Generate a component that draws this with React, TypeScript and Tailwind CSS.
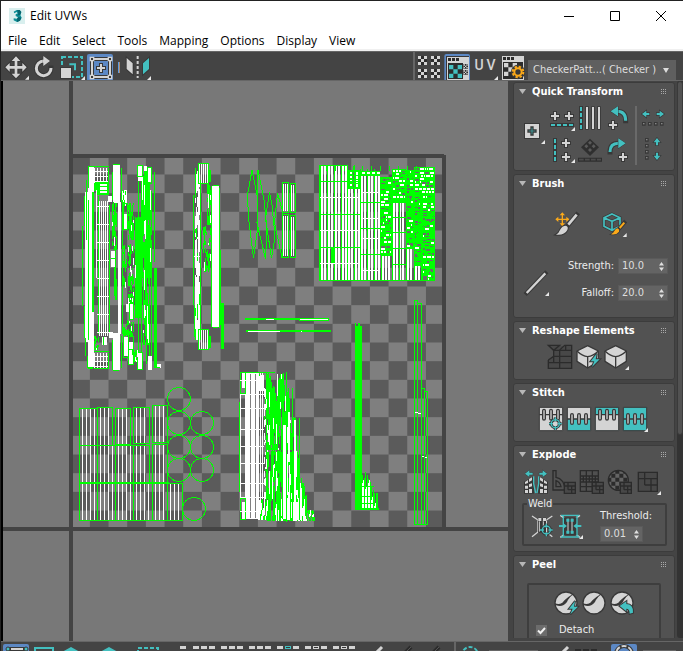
import type { ReactNode } from 'react';

const LIGHT = '#d4d4d4';
const TEAL = '#43c0c0';
const EDGE = '#383838';
const AMBER = '#fba919';
const GREEN = '#00ff00';
const WHITE = '#ffffff';

/* ---------- UV shells ---------- */

type Layer = { fill: string; d: string };

function makeRandom(seed: number) {
  let s = seed;
  return () => {
    s = (s * 1664525 + 1013904223) % 4294967296;
    return s / 4294967296;
  };
}

const box = (x: number, y: number, w: number, h: number) => `M${x} ${y}h${w}v${h}h${-w}z`;

function buildShells(): Layer[] {
  const layers: Layer[] = [];
  const rnd = makeRandom(11);
  const put = (fill: string, x: number, y: number, w: number, h: number) => {
    const last = layers[layers.length - 1];
    if (last && last.fill === fill) last.d += box(x, y, w, h);
    else layers.push({ fill, d: box(x, y, w, h) });
  };
  const frame = (x: number, y: number, w: number, h: number) => {
    put(GREEN, x, y, w, 1);
    put(GREEN, x, y + h - 1, w, 1);
    put(GREEN, x, y, 1, h);
    put(GREEN, x + w - 1, y, 1, h);
  };
  // Columns of short vertical runs: g and w are the shares of green and white.
  const weave = (x0: number, x1: number, y0: number, y1: number, g: number, w: number, run = 12) => {
    for (let x = x0; x < x1; x++) {
      let y = y0 + Math.floor(rnd() * 3);
      while (y < y1) {
        const n = Math.min(y1 - y, 2 + Math.floor(rnd() * run));
        const r = rnd();
        if (r < g) put(GREEN, x, y, 1, n);
        else if (r < g + w) put(WHITE, x, y, 1, n);
        y += n;
      }
    }
  };
  const stripes = (x: number, y: number, w: number, h: number, on: number, pitch: number) => {
    for (let i = 1; i + on < w; i += pitch) put(WHITE, x + i, y, on, h);
  };

  // Far left island
  put(WHITE, 88, 167, 6, 200);
  put(WHITE, 85, 192, 8, 150);
  put(GREEN, 86, 180, 1, 60);
  put(GREEN, 84, 196, 1, 30);
  put(GREEN, 82, 226, 1, 80);
  put(GREEN, 84, 306, 1, 32);
  put(GREEN, 85, 338, 1, 18);
  put(GREEN, 87, 356, 1, 12);
  put(GREEN, 89, 166, 20, 1);
  put(GREEN, 88, 367, 5, 2);
  put(GREEN, 88, 166, 1, 22);
  put(GREEN, 88, 200, 1, 140);
  put(GREEN, 92, 192, 2, 120);
  put(GREEN, 94, 182, 3, 9);
  put(WHITE, 96, 190, 1, 88);
  put(GREEN, 98, 196, 1, 138);
  put(GREEN, 109, 205, 1, 130);
  stripes(98, 201, 12, 135, 1, 2);
  for (let y = 206; y < 334; y += 18) put(WHITE, 97, y, 12, 1);
  for (const y of [168, 353]) {
    stripes(93, y, 16, 15, 1, 3);
    for (let i = 0; i < 3; i++) put(WHITE, 94, y + 3 + i * 5, 14, 1);
    put(GREEN, 108, y, 1, 15);
    put(GREEN, 94, y + 15, 15, 1);
  }
  put(GREEN, 94, 351, 15, 1);
  put(GREEN, 97, 182, 12, 13);
  put(WHITE, 100, 184, 7, 2);
  put(WHITE, 100, 187, 7, 3);
  put(WHITE, 100, 191, 7, 2);
  put(WHITE, 102, 337, 5, 8);
  put(GREEN, 103, 337, 1, 8);
  weave(94, 99, 336, 350, 0.5, 0.1, 5);

  // Second band
  put(WHITE, 113, 165, 7, 38);
  put(GREEN, 113, 164, 7, 1);
  put(GREEN, 112, 172, 1, 28);
  put(GREEN, 121, 168, 1, 34);
  put(WHITE, 108, 196, 4, 6);
  put(WHITE, 118, 202, 3, 132);
  put(GREEN, 122, 200, 1, 134);
  put(WHITE, 113, 333, 7, 37);
  put(WHITE, 109, 332, 4, 6);
  put(GREEN, 112, 340, 1, 30);
  put(GREEN, 121, 336, 1, 32);
  put(GREEN, 113, 370, 6, 1);
  weave(112, 117, 202, 250, 0.6, 0.06, 8);
  weave(114, 117, 265, 300, 0.7, 0.05, 9);
  put(WHITE, 111, 251, 4, 16);
  put(GREEN, 111, 258, 4, 1);
  put(GREEN, 115, 245, 1, 52);

  // Third band
  put(WHITE, 123, 190, 4, 14);
  weave(122, 126, 190, 206, 0.55, 0.4, 4);
  put(WHITE, 124, 214, 4, 15);
  frame(123, 203, 5, 27);
  weave(128, 134, 203, 240, 0.7, 0.08, 5);
  weave(123, 127, 244, 288, 0.5, 0.05, 9);
  weave(128, 134, 244, 292, 0.45, 0.05, 6);
  weave(128, 134, 292, 304, 0.6, 0.3, 3);
  put(WHITE, 130, 304, 4, 15);
  put(WHITE, 126, 304, 3, 8);
  frame(129, 303, 5, 17);
  weave(123, 134, 320, 336, 0.5, 0.12, 4);
  put(WHITE, 124, 337, 4, 19);
  put(WHITE, 129, 342, 4, 22);
  frame(123, 330, 6, 28);
  frame(128, 336, 6, 29);
  put(GREEN, 129, 349, 4, 1);

  // Dense green bands
  weave(135, 142, 216, 318, 0.9, 0.05, 24);
  weave(142, 152, 176, 278, 0.85, 0.04, 20);
  weave(143, 149, 270, 345, 0.5, 0.08, 20);
  for (const x of [138, 141, 146, 149]) put(GREEN, x, 168, 1, 196);
  put(GREEN, 154, 172, 1, 90);
  put(GREEN, 154, 268, 3, 100);
  put(GREEN, 151, 240, 1, 120);
  put(WHITE, 138, 165, 5, 16);
  put(WHITE, 144, 166, 3, 10);
  put(WHITE, 148, 168, 4, 14);
  frame(137, 165, 6, 12);
  frame(147, 167, 5, 17);
  put(GREEN, 144, 171, 3, 12);
  put(WHITE, 138, 353, 4, 17);
  put(WHITE, 148, 356, 4, 14);
  frame(137, 352, 6, 18);
  put(WHITE, 157, 364, 4, 4);
  put(GREEN, 155, 367, 5, 1);
  weave(132, 138, 350, 362, 0.5, 0.1, 4);

  // Tall pair of strips
  weave(195, 200, 170, 340, 0.08, 0.72, 14);
  put(GREEN, 195, 168, 1, 30);
  put(GREEN, 193, 195, 1, 110);
  put(GREEN, 194, 305, 1, 32);
  put(GREEN, 200, 180, 1, 160);
  put(WHITE, 194, 256, 6, 1);
  for (const y of [164, 330]) {
    stripes(198, y, 12, 19, 1, 2);
    frame(198, y - 1, 11, 21);
    put(GREEN, 209, y + 6, 2, 12);
  }
  weave(207, 211, 183, 225, 0.6, 0.25, 9);
  weave(203, 211, 226, 272, 0.35, 0.04, 8);
  put(WHITE, 212, 186, 7, 141);
  put(GREEN, 211, 186, 1, 141);
  put(GREEN, 219, 188, 1, 140);
  put(GREEN, 213, 185, 6, 1);
  put(GREEN, 213, 327, 5, 1);
  put(GREEN, 221, 303, 3, 46);
  put(GREEN, 220, 250, 1, 75);

  // Small striped strips
  for (const [x, y, w, h] of [[282, 182, 7, 31], [290, 183, 6, 30], [282, 214, 7, 44], [290, 215, 6, 43]]) {
    stripes(x, y + 2, w, h - 4, 1, 2);
    frame(x, y, w, h);
  }

  // Large packed block
  for (let x = 320; x < 347; x += 7) {
    stripes(x, 166, 7, 114, 2, 3);
    put(GREEN, x, 165, 1, 116);
  }
  for (let x = 347; x < 360; x += 7) {
    stripes(x, 189, 7, 91, 2, 3);
    put(GREEN, x, 165, 1, 116);
  }
  put(GREEN, 348, 170, 12, 19);
  for (let y = 172; y < 187; y += 4) {
    put(WHITE, 350, y, 2, 2);
    put('#666666', 353, y, 1, 3);
    put(WHITE, 356, y, 2, 3);
  }
  for (let x = 360; x < 380; x += 7) {
    stripes(x, 176, 8, 104, 2, 3);
    put(GREEN, x, 169, 1, 112);
  }
  put(GREEN, 360, 171, 20, 5);
  for (let x = 362; x < 379; x += 5) put(WHITE, x, 172, 3, 2);
  for (const y of [181, 214, 247]) put(GREEN, 320, y, 40, 1);
  for (const y of [197, 230, 263]) put(WHITE, 320, y, 40, 1);
  for (const y of [202, 228, 254]) put(GREEN, 360, y, 21, 1);
  for (const y of [192, 218, 238, 270]) put(WHITE, 361, y, 19, 1);
  put(GREEN, 319, 165, 28, 1);
  put(GREEN, 331, 247, 3, 16);
  put(GREEN, 341, 190, 1, 24);

  // Small packed pieces: a green cell with a white or empty centre.
  const flecks = (x0: number, x1: number, y0: number, y1: number, g: number, w: number) => {
    put(GREEN, x0, y0, x1 - x0, y1 - y0);
    let y = y0 + 1;
    while (y < y1 - 2) {
      let x = x0 + 1;
      while (x < x1 - 1) {
        const n = Math.min(1 + Math.floor(rnd() * 4), x1 - 1 - x);
        const r = rnd();
        if (r < w) put(WHITE, x, y, n, 2);
        else if (r < w + g) put('#6a6a6a', x, y + Math.floor(rnd() * 2), n, 1 + Math.floor(rnd() * 2));
        x += n + 1;
      }
      y += 3 + Math.floor(rnd() * 2);
    }
  };
  flecks(380, 392, 177, 255, 0.4, 0.35);
  flecks(392, 406, 169, 202, 0.3, 0.5);
  flecks(406, 414, 170, 248, 0.5, 0.12);
  flecks(414, 435, 167, 195, 0.2, 0.65);
  flecks(414, 422, 195, 265, 0.5, 0.2);
  flecks(422, 435, 195, 281, 0.5, 0.22);
  for (const [x0, x1, y0] of [[381, 392, 255], [392, 406, 202], [406, 414, 248], [414, 421, 265]]) {
    stripes(x0, y0, x1 - x0 + 1, 280 - y0, 2, 3);
    put(GREEN, x0, y0, 1, 281 - y0);
    put(GREEN, x1, y0, 1, 281 - y0);
    put(GREEN, x0, y0, x1 - x0, 1);
  }
  for (const y of [217, 232, 248, 264]) put(GREEN, 392, y, 14, 1);
  put(GREEN, 399, 202, 1, 79);
  put(GREEN, 319, 165, 1, 116);
  put(GREEN, 319, 280, 116, 1);
  for (let x = 326; x < 420; x += 9) put(GREEN, x, 166, 1, 5);

  // Thin horizontal strips
  put(GREEN, 245, 318, 84, 2);
  put(GREEN, 299, 320, 30, 1);
  put(WHITE, 266, 319, 8, 1);
  put(WHITE, 300, 319, 28, 1);
  put(GREEN, 246, 330, 85, 2);
  put(WHITE, 248, 331, 32, 1);
  put(WHITE, 301, 331, 1, 1);

  // Tall solid strip and its steps
  put(GREEN, 355, 326, 7, 184);
  put(GREEN, 355, 323, 1, 4);
  put(GREEN, 358, 323, 2, 4);
  [[362, 475, 480], [365, 472, 486], [368, 479, 480], [371, 487, 497], [374, 493, 503]].forEach(([x, y, w]) => {
    put(WHITE, x, w, 2, 508 - w);
    put(GREEN, x, y, 1, w - y + 3);
    put(GREEN, x + 2, y + 3, 1, 506 - y);
  });
  for (const y of [486, 496, 503]) put(GREEN, 362, y, 12, 1);
  put(GREEN, 355, 508, 24, 2);
  put(GREEN, 376, 493, 2, 16);

  // Tall thin outlines
  put(GREEN, 414, 300, 1, 225);
  put(GREEN, 417, 300, 1, 225);
  put(GREEN, 421, 303, 1, 222);
  put(GREEN, 424, 388, 1, 137);
  put(GREEN, 427, 391, 1, 134);
  put(GREEN, 414, 300, 4, 1);
  put(GREEN, 417, 303, 5, 1);
  put(GREEN, 421, 388, 4, 1);
  put(GREEN, 424, 391, 4, 1);
  put(GREEN, 414, 524, 14, 1);
  put(WHITE, 415, 412, 3, 1);
  put(WHITE, 418, 413, 3, 1);
  put(WHITE, 422, 456, 2, 1);
  put(WHITE, 425, 457, 2, 1);

  // Bottom left sheets
  const sheets: [number, number, number, number][] = [
    [79, 408, 19, 38], [97, 407, 16, 39], [115, 408, 16, 37], [133, 407, 17, 37], [152, 405, 16, 38],
    [79, 445, 19, 38], [97, 445, 19, 38], [115, 445, 19, 38], [133, 445, 17, 38], [152, 444, 16, 39],
    [79, 483, 19, 38], [97, 483, 19, 38], [115, 483, 19, 38], [133, 483, 20, 38], [152, 483, 16, 38], [167, 483, 16, 38],
  ];
  for (const [x, y, w, h] of sheets) {
    for (let i = 3; i < w - 2; i += 4) put(WHITE, x + i, y + 1, 1, h - 2);
    frame(x, y, w, h);
  }
  put(GREEN, 79, 482, 90, 1);

  // Bottom centre island
  put(WHITE, 245, 373, 14, 146);
  stripes(257, 372, 7, 148, 1, 2);
  put(WHITE, 240, 395, 1, 105);
  put(GREEN, 239, 402, 1, 90);
  put(WHITE, 242, 373, 3, 15);
  put(WHITE, 242, 502, 3, 17);
  frame(240, 372, 6, 22);
  frame(240, 498, 6, 22);
  put('#808080', 250, 374, 1, 144);
  put('#808080', 255, 374, 1, 144);
  for (const y of [380, 394, 408, 429, 446, 463, 483, 497, 511]) put(WHITE, 240, y, 24, 1);
  put(GREEN, 245, 372, 30, 1);
  weave(259, 264, 373, 391, 0.4, 0.55, 14);
  weave(264, 268, 385, 520, 0.12, 0.55, 8);
  weave(259, 268, 498, 520, 0.4, 0.5, 12);
  const tops = [372, 373, 372, 376, 374, 382, 388, 385, 376, 392, 384, 373, 380, 374, 372, 372, 374, 372, 372, 394, 400, 392, 388, 398, 418, 420, 422, 418, 417, 418, 435, 435, 458, 460, 476, 477, 482, 482, 486, 495, 494];
  tops.forEach((y, i) => {
    const x = 266 + i;
    const mid = Math.max(y, 450);
    const late = i > 14;
    weave(x, x + 1, y, mid, 0.82, late ? 0.12 : 0.08, 22);
    weave(x, x + 1, mid, 521, late ? 0.52 : 0.72, late ? 0.46 : 0.14, 26);
  });
  put(WHITE, 283, 425, 3, 94);
  put(WHITE, 288, 412, 2, 50);
  put(WHITE, 294, 420, 2, 60);
  put(WHITE, 287, 498, 3, 22);
  put(WHITE, 293, 502, 6, 18);
  weave(307, 315, 510, 521, 0.6, 0.15, 3);
  for (const [x, y, h] of [[282, 374, 145], [286, 372, 150], [292, 388, 132], [299, 418, 102]]) put(GREEN, x, y, 1, h);
  return layers;
}

const SHELLS = buildShells();

const CIRCLES: [number, number][] = [
  [179, 399], [179, 423], [202, 423], [179, 447], [202, 447], [179, 470], [202, 470], [194, 509],
];

function Canvas() {
  return (
    <main className="min-w-0 flex-1 overflow-hidden border-l-2 border-black bg-[#787878]">
      <svg className="block h-[560px] w-[505px] overflow-visible" role="img" aria-label="UV layout">
        <defs>
          <pattern id="checker" x="71.2" y="155.8" width="37.34" height="37.34" patternUnits="userSpaceOnUse">
            <rect width="38" height="38" fill="#7f7f7f" />
            <rect width="18.67" height="18.67" fill="#5b5b5b" />
            <rect x="18.67" y="18.67" width="18.67" height="18.67" fill="#5b5b5b" />
          </pattern>
        </defs>
        <g transform="translate(-3 -81)" shapeRendering="crispEdges">
          <rect x="71" y="156" width="373" height="373" fill="url(#checker)" />
          <path d="M69 81h4v3000h-4zM3 527h3000v4h-3000zM69 154h375v4h-375zM442 155h4v374h-4z" fill="#444" />
          {SHELLS.map((layer, i) => (
            <path key={i} d={layer.d} fill={layer.fill} />
          ))}
          <g fill="none" stroke={GREEN}>
            {CIRCLES.map(([x, y]) => (
              <circle key={`${x}-${y}`} cx={x} cy={y} r="11.5" />
            ))}
            <path d="M252 170L247.500 195L248.500 218L253.500 258L257.500 230L257 195ZM258 170L257 223L265.500 259L267 230L264 200ZM269.500 192L265.500 218L271.500 258L275 237L272 205ZM277.500 193L274.500 223L282 258L283 213Z" />
          </g>
        </g>
      </svg>
    </main>
  );
}

/* ---------- Icon parts, drawn on a grid of three units to a pixel ---------- */

function Icon({ view, className, children }: { view: string; className: string; children: ReactNode }) {
  return (
    <svg viewBox={view} className={className} aria-hidden="true">
      {children}
    </svg>
  );
}

function Solid({ d, fill = LIGHT, edge = 6 }: { d: string; fill?: string; edge?: number }) {
  return <path d={d} fill={fill} stroke={EDGE} strokeWidth={edge} style={{ paintOrder: 'stroke' }} />;
}

function Line({ d, color = LIGHT, width = 6 }: { d: string; color?: string; width?: number }) {
  return (
    <>
      <path d={d} fill="none" stroke={EDGE} strokeWidth={width + 6} strokeLinecap="square" />
      <path d={d} fill="none" stroke={color} strokeWidth={width} />
    </>
  );
}

const Corner = ({ x, y }: { x: number; y: number }) => <path d={`M${x} ${y}v-12l-12 12z`} fill="#e8e8e8" />;

const plus = (x: number, y: number) => `M${x - 3} ${y - 12}h6v9h9v6h-9v9h-6v-9h-9v-6h9z`;

function Tool({ label, view, className = 'h-[30px] w-7', children }: { label: string; view: string; className?: string; children: ReactNode }) {
  return (
    <button type="button" aria-label={label} className="block shrink-0">
      <Icon view={view} className={className}>
        {children}
      </Icon>
    </button>
  );
}

/* ---------- Title, menu, toolbar ---------- */

function TitleBar() {
  return (
    <header className="flex h-[29px] shrink-0 items-center bg-white pl-2 text-black">
      <Icon view="0 0 48 48" className="h-4 w-4">
        <rect width="48" height="48" fill="#d9efee" />
        <path d="M14 11l9-5h9l5 6-3 9 4 8-5 9-9 4-10-5v-6l9 1 4-4-7-4v-5l6-3-3-4-7 4z" fill="#0c8f96" />
        <path d="M24 6h8l5 6-3 8-9 3 3-8zM24 33l4-6 9 2-4 9-9 4z" fill="#07656f" />
      </Icon>
      <h1 className="ml-[5px] text-[12px]">Edit UVWs</h1>
      <div className="ml-auto flex">
        <button type="button" aria-label="Minimize" className="flex h-7 w-[46px] items-center justify-center">
          <svg className="h-[10px] w-[10px]" shapeRendering="crispEdges"><path d="M0 5h10v1H0z" /></svg>
        </button>
        <button type="button" aria-label="Maximize" className="flex h-7 w-[46px] items-center justify-center">
          <svg className="h-[10px] w-[10px]"><path d="M.5.5h9v9h-9z" fill="none" stroke="#000" /></svg>
        </button>
        <button type="button" aria-label="Close" className="flex h-7 w-[45px] items-center justify-center">
          <svg className="h-[10px] w-[10px]"><path d="M0 0l10 10M10 0L0 10" stroke="#000" /></svg>
        </button>
      </div>
    </header>
  );
}

function MenuBar() {
  return (
    <nav className="flex h-[21px] shrink-0 items-center gap-3 border-b-2 border-[#f0f0f0] bg-white pl-[7px] pt-[2px] text-[12px] text-black">
      {['File', 'Edit', 'Select', 'Tools', 'Mapping', 'Options', 'Display', 'View'].map((name) => (
        <button key={name} type="button">{name}</button>
      ))}
    </nav>
  );
}

const checkers = (x: number, y: number, s: number, n: number) => {
  let d = '';
  for (let r = 0; r < n; r++) for (let c = 0; c < n; c++) if ((r + c) % 2 === 0) d += box(x + c * s, y + r * s, s, s);
  return d;
};

function Toolbar() {
  return (
    <div className="flex h-[30px] shrink-0 items-stretch border-y border-[#666] bg-[#444] pl-px">
      <Tool label="Move" view="6 156 84 84" className="h-7 w-7">
        <Solid d="M48 169l13 14h-9v15h15v-9l13 13-13 13v-9h-15v15h9l-13 14-13-14h9v-15h-15v9l-13-13 13-13v9h15v-15h-9z" />
        <Corner x={87} y={239} />
      </Tool>
      <Tool label="Rotate" view="90 156 84 84" className="h-7 w-7">
        <Line d="M153 204a22 22 0 1 1-22-21" width={9} />
        <Solid d="M130 168l20 15-20 15z" edge={3} />
        <Solid d="M129 179h6v9h-6z" edge={0} />
      </Tool>
      <Tool label="Scale" view="174 156 84 84" className="h-7 w-7">
        <path d="M186 171h60v60h-60z" fill="none" stroke={TEAL} strokeWidth="6" strokeDasharray="12 6" />
        <path d="M208 193h17v18" fill="none" stroke={TEAL} strokeWidth="6" />
        <Solid d="M183 204h30v30h-30z" />
        <Corner x={255} y={240} />
      </Tool>
      <Tool label="Freeform" view="258 156 84 84" className="h-7 w-7">
        <rect x="261" y="162" width="78" height="81" rx="6" fill="#5c88c4" />
        <path d="M276 177h54v54h-54z" fill="none" stroke={EDGE} strokeWidth="12" />
        <path d="M276 177h54v54h-54z" fill="none" stroke={LIGHT} strokeWidth="6" />
        {[[276, 177], [330, 177], [276, 231], [330, 231]].map(([x, y]) => (
          <path key={`${x}-${y}`} d={box(x - 5, y - 5, 10, 10)} fill={EDGE} stroke={LIGHT} strokeWidth="4" />
        ))}
        <Solid d={plus(303, 204)} />
      </Tool>
      <Icon view="342 156 30 84" className="h-7 w-[10px] shrink-0">
        <path d="M354 186h3v33h-3z" fill="#5c9be0" />
        <path d="M357 186h3v33h-3z" fill="#b08a6a" />
      </Icon>
      <Tool label="Mirror" view="372 156 84 84" className="h-7 w-7">
        <Solid d="M380 174l18 16v33l-18-16z" />
        <Solid d="M447 174l-18 16v33l18-16z" fill={TEAL} />
        <path d="M413 168v66" stroke={LIGHT} strokeWidth="6" strokeDasharray="9 6" />
        <Corner x={453} y={240} />
      </Tool>
      <div className="ml-auto flex items-stretch border-l-2 border-[#666] pr-[7px]">
        <Tool label="Show tiled checker" view="45 156 84 84" className="h-7 w-7">
          {[[54, 168], [93, 168], [54, 207], [93, 207]].map(([x, y]) => (
            <g key={`${x}-${y}`}>
              <rect x={x} y={y} width="27" height="27" fill="#2c2c2c" />
              <path d={checkers(x, y, 9, 3)} fill={LIGHT} />
            </g>
          ))}
        </Tool>
        <Tool label="Show checker in view" view="129 156 84 84" className="h-7 w-7">
          <rect x="133" y="162" width="77" height="81" rx="6" fill="#5c88c4" />
          <path d="M138 168h69v75h-69z" fill={EDGE} />
          <path d="M141 171h66v69h-66z" fill={LIGHT} />
          <path d="M144 174h9v9h-9zM156 174h9v9h-9zM168 174h9v9h-9zM144 189h45v48h-45zM190 192h14v14h-14zM190 210h14v14h-14z" fill="#2c2c2c" />
          <path d={checkers(147, 195, 13, 3)} fill={TEAL} />
          <path d={checkers(191, 193, 4, 3) + checkers(191, 211, 4, 3)} fill={LIGHT} />
        </Tool>
        <button type="button" aria-label="UV display" className="relative flex h-7 w-7 items-center justify-center gap-[3px] pb-[2px] text-[14px] font-medium text-[#d4d4d4] [font-family:Roboto,sans-serif]">
          <span>U</span>
          <span>V</span>
          <svg className="absolute bottom-0 right-px h-1 w-1" aria-hidden="true"><path d="M4 0v4H0z" fill="#e8e8e8" /></svg>
        </button>
        <Tool label="Checker settings" view="297 156 84 84" className="h-7 w-7">
          <path d="M306 168h66v72h-66z" fill={LIGHT} />
          <path d="M309 171h9v9h-9zM321 171h9v9h-9zM333 171h9v9h-9zM309 186h60v51h-60z" fill="#2c2c2c" />
          <path d={checkers(312, 189, 13, 3)} fill={LIGHT} />
          <circle cx="354" cy="216" r="14" fill="none" stroke={EDGE} strokeWidth="15" />
          <circle cx="354" cy="216" r="16" fill="none" stroke={AMBER} strokeWidth="6" strokeDasharray="7 5.600" />
          <circle cx="354" cy="216" r="11" fill={EDGE} stroke={AMBER} strokeWidth="6" />
        </Tool>
        <div className="relative ml-px mt-2">
          <select
            aria-label="Texture"
            className="block h-5 w-[148px] appearance-none bg-[#5f5f5f] pl-[5px] text-[11px] text-[#dedede] [font-family:'DejaVu_Sans_Condensed','DejaVu_Sans',sans-serif]"
          >
            <option>CheckerPatt...( Checker )</option>
          </select>
          <svg className="pointer-events-none absolute right-[7px] top-2 h-[5px] w-[6px]" aria-hidden="true">
            <path d="M0 0h6L3 5z" fill="#dcdcdc" />
          </svg>
        </div>
      </div>
    </div>
  );
}

/* ---------- Side panel ---------- */

function Rollout({ title, height, children }: { title: string; height: string; children: ReactNode }) {
  return (
    <section className={`w-[162px] shrink-0 overflow-hidden rounded-[3px] border border-[#3c3c3c] bg-[#525252] ${height}`}>
      <button type="button" className="flex h-[17px] w-full items-center pl-[5px] pr-[7px]">
        <svg className="h-[5px] w-[7px]" aria-hidden="true"><path d="M0 0h7L3.500 5z" fill="#b8b8b8" /></svg>
        <span className="ml-[6px] text-[11px] leading-[17px] font-bold text-white">{title}</span>
        <svg className="ml-auto h-[5px] w-[6px]" shapeRendering="crispEdges" aria-hidden="true">
          <path d="M0 0h1v1H0zM2 0h1v1H2zM4 0h1v1H4zM0 2h1v1H0zM2 2h1v1H2zM4 2h1v1H4zM0 4h1v1H0zM2 4h1v1H2zM4 4h1v1H4z" fill="#aaa" />
        </svg>
      </button>
      {children}
    </section>
  );
}

function Spinner({ id, value, width }: { id: string; value: string; width: string }) {
  return (
    <div className={`flex h-4 items-center border border-[#5a5a5a] bg-[#646464] pr-[3px] ${width}`}>
      <input id={id} type="text" defaultValue={value} className="w-0 min-w-0 flex-1 bg-transparent pl-[3px] text-[11px] leading-[14px] text-[#dedede] outline-none" />
      <svg className="h-[9px] w-[5px]" aria-hidden="true"><path d="M0 3.500h5L2.500 0zM0 5.500h5L2.500 9z" fill="#dedede" /></svg>
    </div>
  );
}

function QuickTransform() {
  return (
    <Rollout title="Quick Transform" height="h-[89px]">
      <div className="flex pl-[6px] pt-1">
        <div className="flex h-[60px] items-center">
          <Tool label="Align to pivot" view="36 117 84 90">
            <Solid d="M51 132h42v42h-42z" />
            <path d={plus(72, 153)} fill={TEAL} stroke={EDGE} strokeWidth="4" />
            <Corner x={111} y={192} />
          </Tool>
        </div>
        <div className="grid grid-cols-3">
          <Tool label="Align horizontally" view="120 72 84 90">
            <Solid d={plus(141, 108) + plus(183, 108)} />
            <path d="M126 129h72v12h-72z" fill={EDGE} />
            <path d="M129 135h66" stroke={TEAL} strokeWidth="6" strokeDasharray="12 6" />
            <Corner x={201} y={153} />
          </Tool>
          <Tool label="Linear align" view="204 72 84 90">
            <path d="M213 78h12v72h-12z" fill={EDGE} />
            <path d="M219 81v66" stroke={TEAL} strokeWidth="6" strokeDasharray="12 6" />
            <Solid d="M234 81h6v66h-6zM252 81h6v66h-6zM270 81h6v66h-6z" edge={5} />
          </Tool>
          <Tool label="Rotate left" view="288 72 84 90">
            <Line d="M353 122q0-28-26-28" color={TEAL} width={9} />
            <Solid d="M308 94l22-15v30z" fill={TEAL} edge={3} />
            <Solid d={plus(315, 135)} />
          </Tool>
          <Tool label="Align vertically" view="120 162 84 90">
            <path d="M135 171h12v72h-12z" fill={EDGE} />
            <path d="M141 174v66" stroke={TEAL} strokeWidth="6" strokeDasharray="12 6" />
            <Solid d={plus(174, 186) + plus(174, 228)} />
            <Corner x={201} y={246} />
          </Tool>
          <Tool label="Align to edge" view="204 162 84 90">
            <path d="M246 173l27 26-27 26-27-26z" fill="#2f2f2f" />
            <path d="M246 179l6 6-6 6-6-6zM235 190l6 6-6 6-6-6zM257 190l6 6-6 6-6-6zM246 201l6 6-6 6-6-6z" fill="#5a5a5a" />
            <path d="M210 230h72v12h-72z" fill="#2f2f2f" />
            <path d="M213 236h66" stroke="#4c4c4c" strokeWidth="5" strokeDasharray="14 4" />
          </Tool>
          <Tool label="Rotate right" view="288 162 84 90">
            <Line d="M306 213q0-26 26-26" color={TEAL} width={9} />
            <Solid d="M353 187l-22-15v30z" fill={TEAL} edge={3} />
            <Solid d={plus(345, 228)} />
          </Tool>
        </div>
        <div className="mt-[2px] ml-[3px] h-[59px] w-[2px] bg-[#6a6a6a]" />
        <div className="ml-[2px]">
          <Tool label="Space horizontally" view="393 72 84 90">
            <Solid d="M402 102l13-10v7h9v6h-9v7zM468 102l-13-10v7h-9v6h9v7z" fill={TEAL} edge={4} />
            <path d="M404 128h7v7h-7zM422 128h7v7h-7zM440 128h7v7h-7zM458 128h7v7h-7z" fill={LIGHT} stroke={EDGE} strokeWidth="4" />
          </Tool>
          <Tool label="Space vertically" view="393 162 84 90">
            <Solid d="M447 174l-10 13h7v9h6v-9h7zM447 240l-10-13h7v-9h6v9h7z" fill={TEAL} edge={4} />
            <path d="M413 176h7v7h-7zM413 194h7v7h-7zM413 212h7v7h-7zM413 230h7v7h-7z" fill={LIGHT} stroke={EDGE} strokeWidth="4" />
          </Tool>
        </div>
      </div>
    </Rollout>
  );
}

function Brush() {
  return (
    <Rollout title="Brush" height="h-[144px]">
      <div className="flex justify-center gap-[18px] pr-2 pt-[18px]">
        <Tool label="Paint move brush" view="132 120 84 90">
          <path d="M160 130v36M142 148h36" stroke={AMBER} strokeWidth="4" />
          <path d="M160 127l8 9h-16zM160 169l8-9h-16zM139 148l9-8v16zM181 148l-9-8v16z" fill={AMBER} />
          <Line d="M203 134l-25 30" width={8} />
          <Solid d="M171 167q8 3 4 13-9 17-34 14 9-5 12-14 6-13 18-13z" />
        </Tool>
        <Tool label="Relax brush" view="270 120 84 90">
          <path d="M309 132l24 11v26l-24 12-24-12v-26zM285 143l24 11 24-11M309 154v26" fill="none" stroke={EDGE} strokeWidth="9" />
          <path d="M309 132l24 11v26l-24 12-24-12v-26zM285 143l24 11 24-11M309 154v26" fill="none" stroke={TEAL} strokeWidth="5" />
          <Line d="M346 158l-14 16" color={AMBER} width={6} />
          <Solid d="M326 175q7 4 4 10-8 11-24 8 8-4 10-10 4-8 10-8z" fill={AMBER} edge={4} />
          <Corner x={353} y={201} />
        </Tool>
      </div>
      <div className="flex items-center pt-[18px] pr-[6px]">
        <div className="ml-[9px] mt-[6px]">
          <Tool label="Falloff type" view="45 288 84 90">
            <Line d="M56 363l56-59" width={7} />
            <Corner x={123} y={372} />
          </Tool>
        </div>
        <div className="ml-auto grid grid-cols-[auto_auto] items-center justify-items-end gap-x-1 gap-y-[11px] text-[11px] leading-4 text-[#ececec]">
          <label htmlFor="strength">Strength:</label>
          <Spinner id="strength" value="10.0" width="w-[50px]" />
          <label htmlFor="falloff">Falloff:</label>
          <Spinner id="falloff" value="20.0" width="w-[50px]" />
        </div>
      </div>
    </Rollout>
  );
}

function CubeShape({ x }: { x: number }) {
  return (
    <>
      <path d={`M${x} 107l32 16v31l-32 20-32-20v-31z`} fill={LIGHT} stroke={EDGE} strokeWidth="4" strokeLinejoin="round" />
      <path d={`M${x - 32} 123q15 15 32 17 17-2 32-17M${x} 140v33`} fill="none" stroke={EDGE} strokeWidth="4" />
    </>
  );
}

const BOLT = 'M0 0l-18 23h11l-7 17 23-23h-12z';

function Reshape() {
  return (
    <Rollout title="Reshape Elements" height="h-[59px]">
      <div className="flex pl-8 pt-[3px]">
        <Tool label="Straighten" view="114 96 84 90">
          <path d="M138 108h53v68h-70v-26l16-11v-14l-15-17z" fill="#484848" />
          <path d="M121 106h34l-18 15zM170 106h21v15h-37zM121 150l16-11M137 121h54M137 139h54M121 158h70M155 121v54M137 121v37M121 150v25h70v-69M173 121v-15" fill="none" stroke="#2b2b2b" strokeWidth="4" />
        </Tool>
        <Tool label="Quick relax" view="198 96 84 90">
          <CubeShape x={239} />
          <g transform="translate(266 131)"><Solid d={BOLT} fill={TEAL} /></g>
        </Tool>
        <Tool label="Relax" view="282 96 84 90">
          <CubeShape x={323} />
          <Corner x={363} y={180} />
        </Tool>
      </div>
    </Rollout>
  );
}

function StitchIcon({ x, top, bottom, seam }: { x: number; top: string; bottom: string; seam: number }) {
  return (
    <>
      <path d={box(x, 292, 70, 70)} fill={top} />
      <path d={box(x, seam, 70, 362 - seam)} fill={bottom} />
      <path d={box(x, 292, 70, 70)} fill="none" stroke={EDGE} strokeWidth="3" />
      <path d={`M${x} ${seam}h70`} stroke={EDGE} strokeWidth="4" />
      {[14, 35, 56].map((o) => (
        <rect key={o} x={x + o - 4} y={seam - 16} width="8" height="32" rx="4" fill={LIGHT} stroke={EDGE} strokeWidth="4" />
      ))}
    </>
  );
}

function Target({ x, y }: { x: number; y: number }) {
  const d = `M${x} ${y - 19}v12M${x} ${y + 7}v12M${x - 19} ${y}h12M${x + 7} ${y}h12M${x - 12} ${y}a12 12 0 1 0 24 0a12 12 0 1 0-24 0`;
  return (
    <>
      <path d={d} fill="none" stroke={EDGE} strokeWidth="9" />
      <path d={d} fill="none" stroke={TEAL} strokeWidth="4" />
    </>
  );
}

function Stitch() {
  return (
    <Rollout title="Stitch" height="h-[59px]">
      <div className="flex pl-[23px] pt-[3px]">
        <Tool label="Stitch custom" view="87 282 84 90">
          <StitchIcon x={94} top={LIGHT} bottom={LIGHT} seam={314} />
          <Target x={142} y={341} />
        </Tool>
        <Tool label="Stitch to target" view="171 282 84 90">
          <StitchIcon x={178} top={LIGHT} bottom={TEAL} seam={327} />
        </Tool>
        <Tool label="Stitch to source" view="255 282 84 90">
          <StitchIcon x={262} top={TEAL} bottom={LIGHT} seam={314} />
        </Tool>
        <Tool label="Stitch to average" view="339 282 84 90">
          <StitchIcon x={346} top={TEAL} bottom={TEAL} seam={327} />
          <Corner x={420} y={366} />
        </Tool>
      </div>
    </Rollout>
  );
}

function MiniMap({ x, y, s = 33 }: { x: number; y: number; s?: number }) {
  const t = s / 3;
  return (
    <>
      <path d={box(x, y, s, s)} fill="#484848" stroke="#2b2b2b" strokeWidth="4" />
      <path
        d={`M${x} ${y + t}h${3 * t}M${x + t} ${y}v${2 * t}M${x + t} ${y + 2 * t}h${2 * t}M${x + 2 * t} ${y + t}v${2 * t}`}
        fill="none"
        stroke="#2b2b2b"
        strokeWidth="4"
      />
    </>
  );
}

function Explode() {
  return (
    <Rollout title="Explode" height="h-[107px]">
      <div className="flex pl-2 pt-1">
        <Tool label="Break" view="42 84 84 90">
          <path d="M48 128l30-17v53h-30zM120 128l-30-17v53h30z" fill={EDGE} />
          <path d="M51 129l9-6v9l-9 3zM63 120l9-5v9l-9 5zM51 140h9v9h-9zM63 136l9-3v9l-9 3zM51 153h9v9h-9zM63 150h9v12h-9zM117 129l-9-6v9l9 3zM105 120l-9-5v9l9 5zM117 140h-9v9h9zM105 136l-9-3v9l9 3zM117 153h-9v9h9zM105 150h-9v12h9z" fill={LIGHT} />
          <path d="M77 112v22l6 28M92 112v22l-5 28" fill="none" stroke={TEAL} strokeWidth="4" />
          <Solid d="M51 104l13-10v7h10v6h-10v7zM117 104l-13-10v7h-10v6h10v7z" fill={TEAL} edge={3} />
        </Tool>
        <Tool label="Flatten by angle" view="126 84 84 90">
          <path d="M135 95h9v20q24 4 28 38h-37zM144 125v18h15q-3-14-15-18z" fill="#525252" stroke="#2b2b2b" strokeWidth="4" />
          <MiniMap x={169} y={130} />
        </Tool>
        <Tool label="Flatten by smoothing group" view="210 84 84 90">
          <path d="M217 95h54v36h-14v28h-40z" fill="#505050" />
          <path d="M217 95h54v16h-54zM235 95v64M253 95v60M217 120h54M217 129h54M226 111v18M244 111v18M262 111v18M271 95v34M217 111v46h38M217 143h36" fill="none" stroke="#2b2b2b" strokeWidth="4" />
          <MiniMap x={253} y={130} />
        </Tool>
        <Tool label="Flatten by material" view="294 84 84 90">
          <clipPath id="ball"><circle cx="331" cy="124" r="30" /></clipPath>
          <circle cx="331" cy="124" r="30" fill="#646464" />
          <path d={checkers(298, 92, 12, 6)} fill="#2b2b2b" clipPath="url(#ball)" />
          <circle cx="331" cy="124" r="30" fill="none" stroke="#2b2b2b" strokeWidth="4" />
          <MiniMap x={337} y={130} />
        </Tool>
        <Tool label="Flatten custom" view="378 84 84 90">
          <MiniMap x={391} y={100} s={57} />
          <Corner x={459} y={168} />
        </Tool>
      </div>
      <fieldset className="ml-2 w-[145px] rounded-[2px] border-2 border-[#3e3e3e] pb-[2px] text-[11px] leading-[14px] text-[#ececec]">
        <legend className="ml-[3px] h-[14px] px-px">Weld</legend>
        <div className="flex">
          <div className="flex pl-1">
            <Tool label="Target weld" view="60 213 84 90" className="-mt-[2px] h-[30px] w-7">
              <path d="M72 228l18 12v36l-18 14M133 228l-18 12v36l18 14" fill="none" stroke={LIGHT} strokeWidth="4" />
              <path d="M90 236h24v42h-24z" fill={EDGE} />
              <path d="M94 239v36M106 239v36" stroke={LIGHT} strokeWidth="3" />
              <Solid d="M91 234h9v9h-9zM105 234h9v9h-9z" edge={2} />
              <Target x={115} y={270} />
            </Tool>
            <Tool label="Weld selected" view="144 213 84 90" className="-mt-[2px] h-[30px] w-7">
              <path d="M157 226l17 12v42l-17 12M216 226l-17 12v42l17 12" fill="none" stroke={LIGHT} strokeWidth="4" />
              <path d="M165 232h43v54h-43z" fill={EDGE} />
              <path d="M159 226h55M159 291h55M166 228v60M207 228v60" stroke={TEAL} strokeWidth="4" />
              <path d="M180 236v44M192 236v44" stroke={LIGHT} strokeWidth="3" />
              <path d="M175 236h9v9h-9zM188 236h9v9h-9zM175 272h9v9h-9zM188 272h9v9h-9zM177 258l-11-8v5h-13v6h13v5zM196 258l11-8v5h13v6h-13v5z" fill={TEAL} />
              <Corner x={225} y={297} />
            </Tool>
          </div>
          <div className="-mt-[2px] ml-4">
            <label htmlFor="threshold" className="mb-[3px] block h-[14px]">Threshold:</label>
            <Spinner id="threshold" value="0.01" width="w-[43px]" />
          </div>
        </div>
      </fieldset>
    </Rollout>
  );
}

function PeelBall({ x }: { x: number }) {
  return (
    <>
      <circle cx={x} cy="174" r="33" fill={LIGHT} stroke={EDGE} strokeWidth="4" />
      <path d={`M${x - 33} 174q10 6 22-1q15-18 38-29q-18 12-24 27q-14 18-34 9z`} fill={EDGE} />
    </>
  );
}

function Peel() {
  return (
    <Rollout title="Peel" height="h-[120px]">
      <div className="mx-[13px] mt-[10px] h-20 rounded-[2px] border-2 border-[#3e3e3e]">
        <div className="flex justify-center pt-[3px]">
          <Tool label="Quick peel" view="132 129 84 90">
            <PeelBall x={174} />
            <g transform="translate(201 168)"><Solid d={BOLT} fill={TEAL} /></g>
          </Tool>
          <Tool label="Peel mode" view="216 129 84 90">
            <PeelBall x={258} />
          </Tool>
          <Tool label="Reset peel" view="300 129 84 90">
            <PeelBall x={342} />
            <Solid d="M335 183l20-14v8q21 0 20 26l-10 3q0-15-10-15v8z" fill={TEAL} />
          </Tool>
        </div>
        <label className="mt-[5px] flex h-[14px] items-center pl-[7px] text-[11px] leading-[14px] text-[#ececec]">
          <span className="relative flex h-[11px] w-[11px]">
            <input type="checkbox" defaultChecked className="h-[11px] w-[11px] appearance-none bg-[#6c6c6c]" />
            <svg className="pointer-events-none absolute inset-0 h-[11px] w-[11px]" aria-hidden="true">
              <path d="M2 5.500l2.500 2.500L9 3" fill="none" stroke="#f0f0f0" strokeWidth="2" />
            </svg>
          </span>
          <span className="ml-3">Detach</span>
        </label>
      </div>
    </Rollout>
  );
}

function SidePanel() {
  return (
    <aside className="flex w-[175px] shrink-0 flex-col bg-[#444] pb-[3px] [font-family:'DejaVu_Sans_Condensed','DejaVu_Sans',sans-serif]">
      <div className="flex min-h-0 flex-1 justify-between overflow-hidden pl-[5px]">
        <div className="flex min-h-0 flex-col gap-[3px] overflow-hidden pt-px">
          <QuickTransform />
          <Brush />
          <Reshape />
          <Stitch />
          <Explode />
          <Peel />
        </div>
        <div className="w-[6px] rounded-l-[3px] bg-[#333]">
          <div className="h-[354px] w-full rounded-[3px] border border-[#3a3a3a] bg-[#525252]" />
        </div>
      </div>
    </aside>
  );
}

/* ---------- Bottom toolbar ---------- */

function BottomBar() {
  return (
    <footer className="flex h-[10px] shrink-0 overflow-hidden border-t border-[#666] bg-[#444]">
      <svg className="h-[9px] w-[452px] shrink-0" viewBox="1 642 452 9" aria-hidden="true">
        <rect x="3" y="644" width="26" height="20" rx="2" fill="#5c88c4" />
        <path d="M8 649h18" stroke={EDGE} strokeWidth="4" />
        <path d="M11 649h12" stroke={LIGHT} strokeWidth="2" />
        <circle cx="8" cy="649" r="2" fill={TEAL} stroke={EDGE} />
        <circle cx="26" cy="649" r="2" fill={TEAL} stroke={EDGE} />
        <path d="M35 660v-12h18v12" fill="none" stroke={TEAL} strokeWidth="2" />
        <path d="M62 652l9-5 9 5zM100 652l9-5 9 5z" fill={TEAL} />
        <path d="M138 660v-12h20v12" fill="none" stroke={TEAL} strokeWidth="2" strokeDasharray="4 2" />
        <path d="M180 646h6v3h-6z" fill={LIGHT} />
        {[193, 221, 249, 277, 305, 333].map((x, i) => (
          <g key={x}>
            <path d={box(x, 646, 6, 3) + box(x + 16, 646, 6, 3)} fill={LIGHT} />
            <path d={box(x + 8, 646, 6, 3)} fill={i === 3 ? TEAL : LIGHT} />
            {i > 2 && <path d={box(x + 9, 647, 4, 1)} fill={EDGE} />}
          </g>
        ))}
        <path d="M376 653l6-6" stroke={LIGHT} strokeWidth="3" />
        <path d="M405 653l6-6M433 653l6-6" stroke="#2b2b2b" strokeWidth="4" />
        <path d="M405 653l6-6M433 653l6-6" stroke="#555" strokeWidth="1" />
      </svg>
      <div className="ml-px w-[2px] shrink-0 bg-[#666]" />
      <svg className="h-[9px] w-[227px] shrink-0" viewBox="456 642 227 9" aria-hidden="true">
        <circle cx="470" cy="655" r="8" fill="none" stroke={TEAL} strokeWidth="2" strokeDasharray="4 2" />
        <path d="M489 650h49v1h-49zM643 650h33v1h-33z" fill="#666" />
        <path d="M562 653l6-6" stroke={LIGHT} strokeWidth="3" />
        <path d="M575 650h23" stroke="#2b2b2b" strokeWidth="2" strokeDasharray="6 2" />
        <rect x="611" y="644" width="26" height="20" rx="2" fill="#5c88c4" />
        <circle cx="624" cy="654" r="8" fill="none" stroke={EDGE} strokeWidth="4" />
        <circle cx="624" cy="654" r="8" fill="none" stroke={LIGHT} strokeWidth="2" strokeDasharray="5 2" />
      </svg>
    </footer>
  );
}

export default function App() {
  return (
    <div className="flex h-screen flex-col overflow-hidden border-t border-l border-[#222] bg-[#444] [font-family:'Open_Sans','Noto_Sans',sans-serif]">
      <TitleBar />
      <MenuBar />
      <Toolbar />
      <div className="flex min-h-0 flex-1">
        <Canvas />
        <SidePanel />
      </div>
      <BottomBar />
    </div>
  );
}
